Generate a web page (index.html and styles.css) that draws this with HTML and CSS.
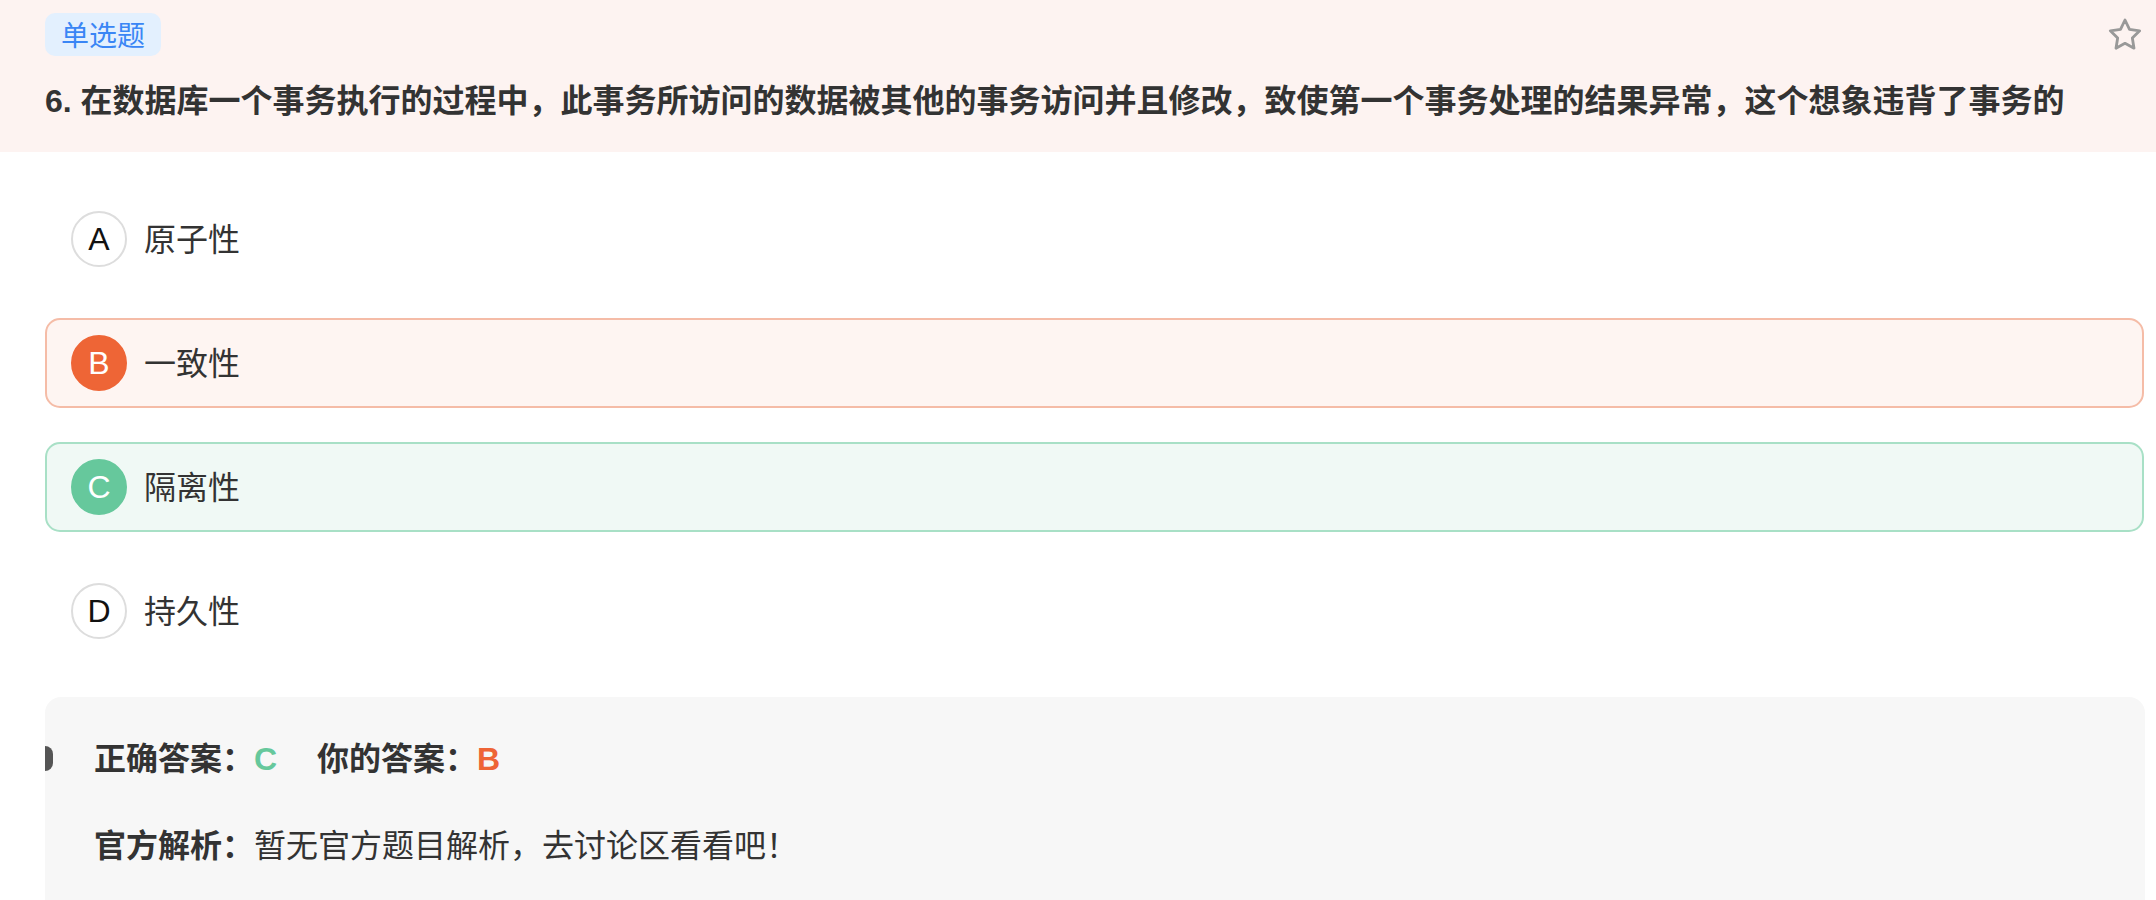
FILE: index.html
```html
<!DOCTYPE html>
<html lang="zh-CN">
<head>
<meta charset="utf-8">
<title>单选题</title>
<link rel="stylesheet" href="styles.css">
</head>
<body>
<div class="header">
  <div class="top-row">
    <span class="tag">单选题</span>
    <svg class="star" width="40" height="40" viewBox="0 0 24 24" fill="none" stroke="#999" stroke-width="1.7" stroke-linejoin="round"><path d="M12 3l2.7 5.6 6.1.9-4.4 4.3 1 6.1L12 17l-5.4 2.9 1-6.1-4.4-4.3 6.1-.9z"/></svg>
  </div>
  <div class="question">6. 在数据库一个事务执行的过程中，此事务所访问的数据被其他的事务访问并且修改，致使第一个事务处理的结果异常，这个想象违背了事务的</div>
</div>

<div class="options">
  <div class="option"><span class="letter">A</span><span class="opt-text">原子性</span></div>
  <div class="option wrong"><span class="letter">B</span><span class="opt-text">一致性</span></div>
  <div class="option right"><span class="letter">C</span><span class="opt-text">隔离性</span></div>
  <div class="option"><span class="letter">D</span><span class="opt-text">持久性</span></div>
</div>

<div class="panel">
  <span class="marker"></span>
  <div class="answers">
    <span class="label">正确答案：</span><span class="ans-right">C</span>
    <span class="label yours">你的答案：</span><span class="ans-wrong">B</span>
  </div>
  <div class="analysis"><span class="label">官方解析：</span>暂无官方题目解析，去讨论区看看吧！</div>
</div>
</body>
</html>
```

FILE: styles.css
```css
* { box-sizing: border-box; }
body {
  margin: 0;
  background: #fff;
  font-family: "Liberation Sans", "Noto Sans CJK SC", sans-serif;
  color: #333;
}
.header {
  background: #fdf3f1;
  padding: 13px 11px 27px 45px;
}
.top-row {
  display: flex;
  align-items: center;
  justify-content: space-between;
  height: 43px;
}
.tag {
  display: inline-block;
  height: 43px;
  line-height: 43px;
  padding: 0 16px;
  border-radius: 10px;
  background: #e3f0fe;
  color: #3a86f5;
  font-size: 28px;
  font-family: "Noto Sans CJK SC", sans-serif;
}
.star { display: block; }
.question {
  margin-top: 21px;
  font-size: 32px;
  line-height: 48px;
  font-weight: 700;
  color: #333;
  white-space: nowrap;
}
.options {
  margin-top: 42px;
  padding: 0 12px 0 45px;
  display: flex;
  flex-direction: column;
  gap: 34px;
}
.option {
  height: 90px;
  display: flex;
  align-items: center;
  padding-left: 24px;
  border: 2px solid transparent;
  border-radius: 15px;
}
.option.wrong { background: #fef5f2; border-color: #f5bca7; }
.option.right { background: #f0f9f5; border-color: #a8e0c6; }
.letter {
  width: 56px;
  height: 56px;
  border-radius: 50%;
  border: 2px solid #dddddd;
  background: #fff;
  display: flex;
  align-items: center;
  justify-content: center;
  font-size: 32px;
  color: #111;
}
.wrong .letter { background: #ee6536; border-color: #ee6536; color: #fff; }
.right .letter { background: #66c89c; border-color: #66c89c; color: #fff; }
.opt-text {
  margin-left: 17px;
  margin-top: -4px;
  font-size: 32px;
  color: #333;
  font-family: "Noto Sans CJK SC", sans-serif;
}
.panel {
  position: relative;
  margin: 41px 11px 0 45px;
  background: #f7f7f7;
  border-radius: 16px 16px 0 0;
  padding: 38px 40px 60px 49px;
  font-size: 32px;
  line-height: 48px;
  color: #333;
}
.marker {
  position: absolute;
  left: 0;
  top: 49px;
  width: 8px;
  height: 25px;
  background: #555;
  border-radius: 0 13px 13px 0;
}
.label { font-weight: 700; }
.yours { margin-left: 31px; }
.ans-right { color: #66c89c; font-weight: 700; }
.ans-wrong { color: #ee6436; font-weight: 700; }
.analysis { margin-top: 39px; }
```
